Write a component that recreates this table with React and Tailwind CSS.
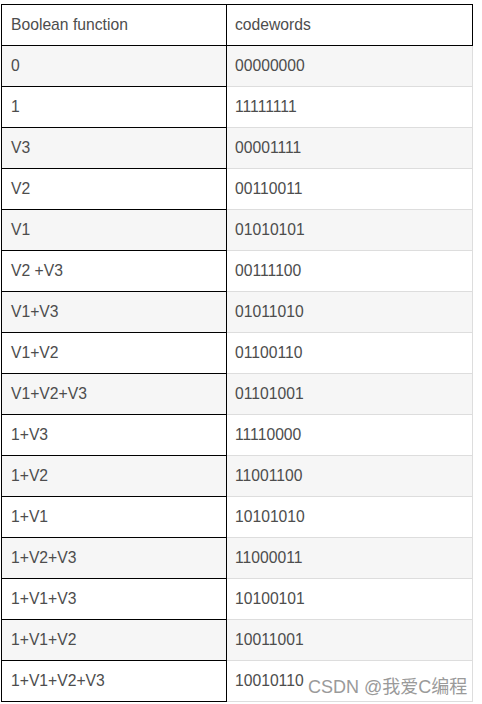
import React from "react";

const rows = [
  ["0", "00000000"],
  ["1", "11111111"],
  ["V3", "00001111"],
  ["V2", "00110011"],
  ["V1", "01010101"],
  ["V2 +V3", "00111100"],
  ["V1+V3", "01011010"],
  ["V1+V2", "01100110"],
  ["V1+V2+V3", "01101001"],
  ["1+V3", "11110000"],
  ["1+V2", "11001100"],
  ["1+V1", "10101010"],
  ["1+V2+V3", "11000011"],
  ["1+V1+V3", "10100101"],
  ["1+V1+V2", "10011001"],
  ["1+V1+V2+V3", "10010110"],
];

export default function App() {
  return (
    <div
      className="relative w-[482px] h-[704px] bg-white pt-[4px] pl-px text-[15.7px] text-[#4d4d4d]"
      style={{ fontFamily: '"Liberation Sans", Arial, sans-serif' }}
    >
      <div className="grid grid-cols-[226px_246px]">
        <div className="h-[42px] flex items-center pl-[9px] border border-black">
          Boolean function
        </div>
        <div className="h-[42px] flex items-center pl-[8px] border-t border-r border-b border-black">
          codewords
        </div>
        {rows.map(([f, c], i) => {
          const bg = i % 2 === 0 ? "bg-[#f6f6f6]" : "bg-white";
          return (
            <React.Fragment key={i}>
              <div
                className={`h-[41px] flex items-center pl-[9px] border-l border-r border-b border-black ${bg}`}
              >
                {f}
              </div>
              <div
                className={`h-[41px] flex items-center pl-[8px] border-r border-b border-[#dddddd] ${bg}`}
              >
                {c}
              </div>
            </React.Fragment>
          );
        })}
      </div>
      <div
        className="absolute left-[308px] top-[674px] text-[18px] text-[#9a9a9a] whitespace-nowrap"
        style={{
          fontFamily: '"Liberation Sans", "Noto Sans CJK SC", sans-serif',
          textShadow: "0 0 2px #fff",
        }}
      >
        CSDN @我爱C编程
      </div>
    </div>
  );
}
